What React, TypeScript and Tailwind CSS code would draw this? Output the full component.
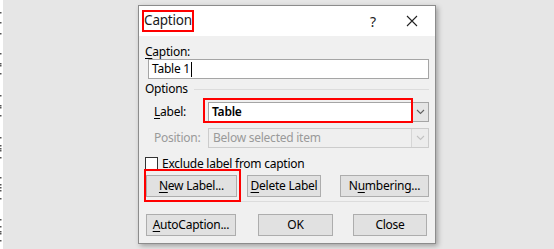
import { ReactNode } from 'react';

const stripDots = [12, 22, 33, 53, 63, 65, 73, 95, 105, 107, 115, 137, 145, 148, 150, 157, 177, 184, 187, 190, 198, 219, 226, 231, 233, 240];

function DocumentEdge() {
  return (
    <svg width="3" height="249" className="shrink-0 bg-white">
      {stripDots.map((y) => (
        <rect key={y} x="0" y={y} width="1.5" height="1.5" fill="#555" />
      ))}
    </svg>
  );
}

function Chevron({ disabled }: { disabled?: boolean }) {
  return (
    <svg width="9" height="6" viewBox="0 0 9 6">
      <path d="M1 1l3.5 3.5L8 1" fill="none" stroke={disabled ? '#c2c2c2' : '#606060'} strokeWidth="1.1" />
    </svg>
  );
}

// red annotation rectangle, drawn over the element it marks
function Mark({ className }: { className: string }) {
  return <span className={`pointer-events-none absolute border-2 border-[#ff0000] ${className}`} />;
}

function Key({ children }: { children: ReactNode }) {
  return <span className="underline underline-offset-2">{children}</span>;
}

function Button({ width, children }: { width: string; children: ReactNode }) {
  return (
    <div className={`flex h-[22px] ${width} items-center justify-center border border-[#adadad] bg-[#e1e1e1] text-black`}>
      {children}
    </div>
  );
}

export default function App() {
  return (
    <div className="flex h-[249px] w-[554px] overflow-hidden bg-[#e6e6e6] font-['Segoe_UI','Noto_Sans',sans-serif] text-[12px] tracking-[-0.25px] text-black">
      <DocumentEdge />

      <div className="ml-[135px] mt-[5px] flex h-[239px] w-[298px] shrink-0 flex-col border border-[#8c8c8c] bg-[#f0f0f0] shadow-[2px_2px_5px_rgba(0,0,0,0.3)]">
        {/* title bar */}
        <div className="flex h-[30px] items-start bg-white">
          <div className="ml-[3px] mt-[4px] flex h-[22px] w-[52px] items-center justify-center border-2 border-[#ff0000] pb-[1px] text-[13.5px] tracking-[-0.2px] text-[#1a1a1a]">
            Caption
          </div>
          <div className="ml-auto flex h-full items-center">
            <span className="w-[20px] text-center text-[14px] text-[#222]">?</span>
            <span className="ml-[6px] flex h-full w-[46px] items-center justify-center">
              <svg width="12" height="12" viewBox="0 0 12 12">
                <path d="M1 1l10 10M11 1L1 11" stroke="#222" strokeWidth="1.1" />
              </svg>
            </span>
          </div>
        </div>

        {/* body */}
        <div className="flex flex-col pl-[7px] pr-[6px]">
          <div className="-ml-[1px] mt-[8px] h-[15px] leading-[15px]">
            <Key>C</Key>aption:
          </div>
          <div className="ml-[2px] flex h-[20px] items-center border border-[#a5a5a5] bg-white pl-[3px]">
            Table 1<span className="ml-[1px] h-[15px] w-px bg-black" />
          </div>

          <div className="-ml-[1px] mt-[2px] flex h-[16px] items-center">
            <span>Options</span>
            <span className="ml-[6px] h-px flex-1 bg-[#dcdcdc]" />
          </div>

          {/* Label row */}
          <div className="mt-[5px] flex h-[20px] items-center">
            <span className="ml-[8px] w-[54px]">
              <Key>L</Key>abel:
            </span>
            <div className="relative flex h-[20px] flex-1 border border-[#a5a5a5] bg-white">
              <span className="flex flex-1 items-center pl-[3px] font-semibold">Table</span>
              <span className="flex w-[17px] items-center justify-center border-l border-[#adadad] bg-[#e5e5e5]">
                <Chevron />
              </span>
              <Mark className="-left-[6px] -top-[5px] h-[25px] w-[210px]" />
            </div>
          </div>

          {/* Position row */}
          <div className="mt-[6px] flex h-[20px] items-center text-[#9a9a9a]">
            <span className="ml-[8px] w-[54px]">Position:</span>
            <div className="flex h-[20px] flex-1 border border-[#cccccc] bg-[#efefef]">
              <span className="flex flex-1 items-center pl-[4px]">Below selected item</span>
              <span className="flex w-[17px] items-center justify-center border-l border-[#d6d6d6] bg-[#ececec]">
                <Chevron disabled />
              </span>
            </div>
          </div>

          {/* checkbox */}
          <div className="-ml-[1px] mt-[9px] flex h-[13px] items-center">
            <span className="h-[13px] w-[13px] border border-[#333] bg-white" />
            <span className="ml-[4px]">Exclude label from caption</span>
          </div>

          {/* label buttons */}
          <div className="mt-[5px] flex">
            <div className="relative">
              <Button width="w-[91px]">
                <span>
                  <Key>N</Key>ew Label...
                </span>
              </Button>
              <Mark className="-left-[2px] -top-[6px] h-[33px] w-[97px]" />
            </div>
            <div className="ml-[10px]">
              <Button width="w-[74px]">
                <span>
                  <Key>D</Key>elete Label
                </span>
              </Button>
            </div>
            <div className="ml-[19px]">
              <Button width="w-[89px]">
                <span>
                  N<Key>u</Key>mbering...
                </span>
              </Button>
            </div>
          </div>

          <div className="mt-[4px] h-px bg-[#dcdcdc]" />

          {/* bottom buttons */}
          <div className="mt-[12px] flex">
            <Button width="w-[90px]">
              <span>
                <Key>A</Key>utoCaption...
              </span>
            </Button>
            <div className="ml-[22px]">
              <Button width="w-[75px]">OK</Button>
            </div>
            <div className="ml-[20px]">
              <Button width="w-[74px]">Close</Button>
            </div>
          </div>
        </div>
      </div>
    </div>
  );
}
